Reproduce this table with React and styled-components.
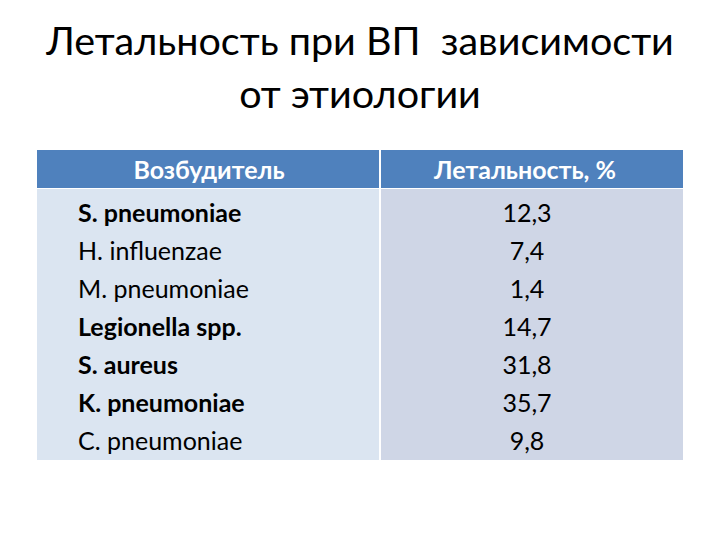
import React from "react";
import styled, { createGlobalStyle } from "styled-components";

const GlobalStyle = createGlobalStyle`
    html, body {
        margin: 0;
        padding: 0;
        background: #ffffff;
    }
    body {
        font-family: "Lato", "Noto Sans", "DejaVu Sans", sans-serif;
        color: #000000;
    }
`;

const rows = [
    { name: "S. pneumoniae", value: "12,3", bold: true },
    { name: "H. influenzae", value: "7,4", bold: false },
    { name: "M. pneumoniae", value: "1,4", bold: false },
    { name: "Legionella spp.", value: "14,7", bold: true },
    { name: "S. aureus", value: "31,8", bold: true },
    { name: "K. pneumoniae", value: "35,7", bold: true },
    { name: "C. pneumoniae", value: "9,8", bold: false },
];

function App() {
    return (
        <Slide>
            <GlobalStyle />
            <Title>
                Летальность при ВП&nbsp; зависимости
                <br />
                от этиологии
            </Title>
            <Table>
                <HeadCell $left>Возбудитель</HeadCell>
                <HeadCell>Летальность, %</HeadCell>
                <NameCol>
                    {rows.map((row) => (
                        <NameCell key={row.name} $bold={row.bold}>
                            {row.name}
                        </NameCell>
                    ))}
                </NameCol>
                <ValueCol>
                    {rows.map((row) => (
                        <ValueCell key={row.name}>{row.value}</ValueCell>
                    ))}
                </ValueCol>
            </Table>
        </Slide>
    );
}

export default App;

const Slide = styled.div`
    width: 720px;
    height: 540px;
    overflow: hidden;
    padding-top: 13px;
    box-sizing: border-box;
`;

const Title = styled.h1`
    margin: 0;
    font-weight: 400;
    font-size: 39.5px;
    line-height: 53px;
    text-align: center;
    color: #000000;
`;

const Table = styled.div`
    margin: 31px 0 0 37px;
    width: 646px;
    display: grid;
    grid-template-columns: 342px 1fr;
    column-gap: 2px;
    row-gap: 1px;
    font-size: 25px;
`;

const HeadCell = styled.div`
    background: #4f81bd;
    color: #ffffff;
    font-weight: 700;
    height: 38px;
    line-height: 38px;
    text-align: center;
    padding-left: ${(p) => (p.$left ? "2px" : "0")};
    padding-right: ${(p) => (p.$left ? "0" : "14px")};
`;

const NameCol = styled.div`
    background: #dbe5f1;
    padding: 4px 0 1px 41px;
`;

const ValueCol = styled.div`
    background: #cfd6e6;
    padding: 4px 10px 1px 0;
    text-align: center;
`;

const NameCell = styled.div`
    height: 38px;
    line-height: 38px;
    font-weight: ${(p) => (p.$bold ? 700 : 400)};
`;

const ValueCell = styled.div`
    height: 38px;
    line-height: 38px;
`;
